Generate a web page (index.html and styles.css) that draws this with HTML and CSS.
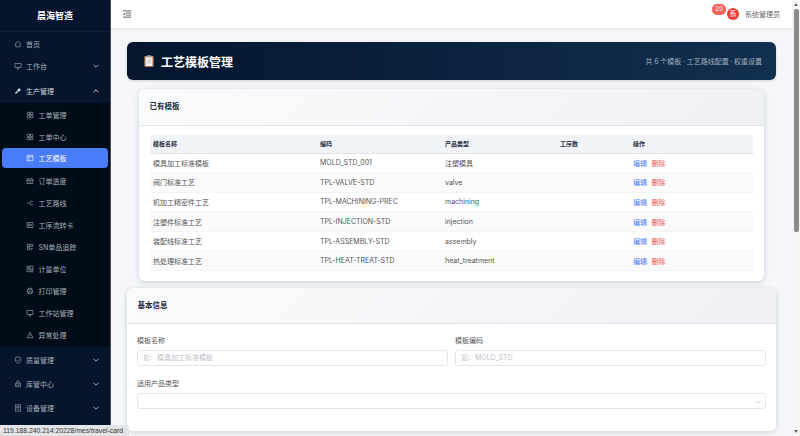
FILE: index.html
```html
<!DOCTYPE html>
<html lang="zh-CN">
  <head>
    <meta charset="UTF-8" />
    <meta name="viewport" content="width=device-width, initial-scale=1.0" />
    <title>工艺模板管理</title>
    <link rel="stylesheet" href="styles.css">
  </head>
  <body>
    <aside class="sidebar">
      <div class="logo">晨海智造</div>
      <nav class="menu">
        <div class="menu-item home">
          <svg class="icon" viewBox="0 0 16 16"><path d="M2 8l6-5.500L14 8M3.500 7v6.500h9V7"/></svg>
          <span>首页</span>
        </div>
        <div class="menu-item">
          <svg class="icon" viewBox="0 0 16 16"><path d="M2 3h12v8H2zM5.500 14h5M8 11v3"/></svg>
          <span>工作台</span>
          <svg class="arrow" viewBox="0 0 10 10"><path d="M2 3.500l3 3 3-3"/></svg>
        </div>
        <div class="menu-item open">
          <svg class="icon" viewBox="0 0 16 16"><path class="solid" d="M10 2l4 4-5 4-3-3zM5.500 8l2.500 2.500-4.500 3.500-1.500-1.500z"/></svg>
          <span>生产管理</span>
          <svg class="arrow" viewBox="0 0 10 10"><path d="M2 6.500l3-3 3 3"/></svg>
        </div>
        <div class="submenu">
          <div class="sub-item">
            <svg class="icon" viewBox="0 0 16 16"><path d="M2.500 2.500h4.500v4.500H2.500zM9 2.500h4.500v4.500H9zM2.500 9h4.500v4.500H2.500zM9 9h4.500v4.500H9z"/></svg>
            <span>工单管理</span>
          </div>
          <div class="sub-item">
            <svg class="icon" viewBox="0 0 16 16"><path d="M2.500 2.500h4.500v4.500H2.500zM9 2.500h4.500v4.500H9zM2.500 9h4.500v4.500H2.500zM9 9h4.500v4.500H9z"/></svg>
            <span>工单中心</span>
          </div>
          <div class="sub-item active">
            <svg class="icon" viewBox="0 0 16 16"><path d="M2 2.500h12v11H2zM2 5.500h12M6 5.500v8"/></svg>
            <span>工艺模板</span>
          </div>
          <div class="sub-item">
            <svg class="icon" viewBox="0 0 16 16"><path d="M2 4h12v9H2zM2 7h12M5 2.500V4M11 2.500V4M5 10h6"/></svg>
            <span>订单进度</span>
          </div>
          <div class="sub-item">
            <svg class="icon" viewBox="0 0 16 16"><path d="M1.500 8h6M9 4.500h5M9 11.500h5M7.500 8L9 4.500M7.500 8L9 11.500"/></svg>
            <span>工艺路线</span>
          </div>
          <div class="sub-item">
            <svg class="icon" viewBox="0 0 16 16"><path d="M2 3h12v10H2zM4.500 6h4v4h-4zM10.500 7H12M10.500 9H12"/></svg>
            <span>工序流转卡</span>
          </div>
          <div class="sub-item">
            <svg class="icon" viewBox="0 0 16 16"><path d="M2.500 2.500h4.500v4.500H2.500zM9 2.500h4.500v4.500H9zM2.500 9h4.500v4.500H2.500zM9 11h4.500M9 13.500h3"/></svg>
            <span>SN单品追踪</span>
          </div>
          <div class="sub-item">
            <svg class="icon" viewBox="0 0 16 16"><path d="M2 2.500h12v11H2zM8 2.500v11M2 8h12M4 5.300h2.500M10 10.700h2.500"/></svg>
            <span>计量单位</span>
          </div>
          <div class="sub-item">
            <svg class="icon" viewBox="0 0 16 16"><path d="M5 5.500V2.500h6v3M5 12H3V5.500h10V12h-2M5 9.500h6v4H5z"/></svg>
            <span>打印管理</span>
          </div>
          <div class="sub-item">
            <svg class="icon" viewBox="0 0 16 16"><path d="M2 3h12v8H2zM5.500 14h5M8 11v3"/></svg>
            <span>工作站管理</span>
          </div>
          <div class="sub-item">
            <svg class="icon" viewBox="0 0 16 16"><path d="M8 2.500l6 11H2zM8 6.500v3.500M8 11.500v.8"/></svg>
            <span>异常处理</span>
          </div>
        </div>
        <div class="menu-item">
          <svg class="icon" viewBox="0 0 16 16"><path d="M8 1.500l5.500 2v4.500c0 3-2.500 5-5.500 6.500-3-1.500-5.500-3.500-5.500-6.500V3.500zM5.500 8L7.500 10l3-3.500"/></svg>
          <span>质量管理</span>
          <svg class="arrow" viewBox="0 0 10 10"><path d="M2 3.500l3 3 3-3"/></svg>
        </div>
        <div class="menu-item">
          <svg class="icon" viewBox="0 0 16 16"><path d="M3 6.500h10v7H3zM5.500 6.500V4a2.500 2.500 0 0 1 5 0v2.500M3 10h10"/></svg>
          <span>库管中心</span>
          <svg class="arrow" viewBox="0 0 10 10"><path d="M2 3.500l3 3 3-3"/></svg>
        </div>
        <div class="menu-item">
          <svg class="icon" viewBox="0 0 16 16"><path d="M3 1.500h10v13H3zM5.500 4.500h5v3h-5zM5.500 10.500h5"/></svg>
          <span>设备管理</span>
          <svg class="arrow" viewBox="0 0 10 10"><path d="M2 3.500l3 3 3-3"/></svg>
        </div>
      </nav>
    </aside>

    <div class="main">
      <header class="topbar">
        <svg class="fold" viewBox="0 0 10 8"><path d="M0 .5h9M3.500 2.800h5.500M3.500 5.200h5.500M0 7.500h9"/><path class="solid" d="M2.500 2.300v3.400L.2 4z"/></svg>
        <div class="user">
          <span class="badge">20</span>
          <span class="avatar">系</span>
          <span class="username">系统管理员</span>
        </div>
      </header>

      <div class="content">
        <div class="banner">
          <h1>
            <svg class="clipboard" viewBox="0 0 12 14">
              <rect x="0.500" y="1" width="11" height="13" rx="1" fill="#c58f5f"/>
              <rect x="2" y="2.500" width="8" height="10.500" fill="#eef0f2"/>
              <rect x="3.500" y="0" width="5" height="2.500" rx=".5" fill="#9aa3ad"/>
              <path d="M3.300 5.500h5.400M3.300 7.500h5.400M3.300 9.500h5.400" stroke="#a9b1bb" stroke-width=".7"/>
            </svg>
            工艺模板管理
          </h1>
          <p>共 6 个模板 · 工艺路线配置 · 权重设置</p>
        </div>

        <section class="card inner">
          <div class="card-head">已有模板</div>
          <div class="list-body">
            <table class="tpl-table">
              <thead>
                <tr>
                  <th class="col-name">模板名称</th>
                  <th class="col-code">编码</th>
                  <th class="col-type">产品类型</th>
                  <th class="col-steps">工序数</th>
                  <th>操作</th>
                </tr>
              </thead>
              <tbody>
                <tr>
                  <td>模具加工标准模板</td><td>MOLD_STD_001</td><td>注塑模具</td><td></td>
                  <td><a class="edit">编辑</a><a class="del">删除</a></td>
                </tr>
                <tr>
                  <td>阀门标准工艺</td><td>TPL-VALVE-STD</td><td>valve</td><td></td>
                  <td><a class="edit">编辑</a><a class="del">删除</a></td>
                </tr>
                <tr>
                  <td>机加工精密件工艺</td><td>TPL-MACHINING-PREC</td><td>machining</td><td></td>
                  <td><a class="edit">编辑</a><a class="del">删除</a></td>
                </tr>
                <tr>
                  <td>注塑件标准工艺</td><td>TPL-INJECTION-STD</td><td>injection</td><td></td>
                  <td><a class="edit">编辑</a><a class="del">删除</a></td>
                </tr>
                <tr>
                  <td>装配线标准工艺</td><td>TPL-ASSEMBLY-STD</td><td>assembly</td><td></td>
                  <td><a class="edit">编辑</a><a class="del">删除</a></td>
                </tr>
                <tr>
                  <td>热处理标准工艺</td><td>TPL-HEAT-TREAT-STD</td><td>heat_treatment</td><td></td>
                  <td><a class="edit">编辑</a><a class="del">删除</a></td>
                </tr>
              </tbody>
            </table>
          </div>
        </section>

        <section class="card">
          <div class="card-head">基本信息</div>
          <div class="form-body">
            <div class="form-row">
              <label class="field">
                <span>模板名称</span>
                <input type="text" placeholder="如：模具加工标准模板" />
              </label>
              <label class="field">
                <span>模板编码</span>
                <input type="text" placeholder="如：MOLD_STD" />
              </label>
            </div>
            <div class="field">
              <span>适用产品类型</span>
              <div class="select">
                <svg viewBox="0 0 10 10"><path d="M1.500 3.500L5 7l3.500-3.500"/></svg>
              </div>
            </div>
          </div>
        </section>
      </div>
    </div>

    <div class="scrollbar">
      <i class="up"></i>
      <div class="thumb"></div>
      <i class="down"></i>
    </div>

    <div class="status">119.188.240.214:20228/mes/travel-card</div>
  </body>
</html>
```

FILE: styles.css
```css
* {
  box-sizing: border-box;
}

body {
  margin: 0;
  height: 436px;
  display: flex;
  overflow: hidden;
  background-color: #f4f6fa;
  color: #333;
  font-family: Inter, "Noto Sans CJK SC", sans-serif;
  font-size: 7px;
}

svg {
  flex-shrink: 0;
}

/* sidebar */
.sidebar {
  width: 111px;
  flex-shrink: 0;
  background-color: #04152d;
  border-right: 1px solid #4a4f57;
  color: #a6adb8;
  overflow: hidden;
}

.logo {
  height: 32px;
  line-height: 31px;
  text-align: center;
  color: #fff;
  font-size: 9px;
  font-weight: 700;
  border-bottom: 1px solid #0a1c36;
}

.menu-item {
  height: 24.300px;
  display: flex;
  align-items: center;
  gap: 4px;
  padding: 0 10px 0 14px;
}

.menu-item.home {
  height: 22.300px;
  padding-top: 1px;
}

.menu-item .arrow {
  margin-left: auto;
  width: 8px;
  height: 8px;
}

.menu-item.open {
  color: #d0d4da;
}

.icon {
  width: 8px;
  height: 8px;
  fill: none;
  stroke: currentColor;
  stroke-width: 1.200;
}

.icon .solid {
  fill: currentColor;
  stroke: none;
}

.arrow {
  fill: none;
  stroke: currentColor;
  stroke-width: 1.200;
}

.submenu {
  background-color: #000c17;
  padding: 1px 0;
}

.sub-item {
  height: 22.050px;
  display: flex;
  align-items: center;
  gap: 4.500px;
  padding-left: 26px;
}

.sub-item.active {
  height: 20px;
  margin: 0 2px 2px;
  padding-left: 24px;
  background-color: #4a7cf8;
  border-radius: 4px;
  color: #fff;
}

/* main */
.main {
  flex: 1;
  min-width: 0;
  display: flex;
  flex-direction: column;
}

.topbar {
  height: 28px;
  flex-shrink: 0;
  display: flex;
  align-items: center;
  justify-content: space-between;
  padding: 0 12px;
  background: #fff;
  box-shadow: 0 1px 3px rgba(0, 0, 0, 0.08);
  position: relative;
}

.fold {
  width: 9px;
  height: 8px;
  fill: none;
  stroke: #555;
  stroke-width: 1;
}

.fold .solid {
  fill: #555;
  stroke: none;
}

.user {
  display: flex;
  align-items: center;
  color: #666;
}

.avatar {
  width: 12px;
  height: 12px;
  border-radius: 50%;
  background-color: #e53f35;
  color: #fff;
  text-align: center;
  line-height: 12px;
  margin-right: 6px;
}

.badge {
  height: 10.500px;
  min-width: 14px;
  margin-right: 1px;
  margin-top: -9px;
  border-radius: 5px;
  background-color: #f2645c;
  color: #fff;
  text-align: center;
  line-height: 10.500px;
  font-size: 6px;
}

.content {
  flex: 1;
  padding: 14px 16px 0 16px;
}

.banner {
  height: 38px;
  display: flex;
  align-items: center;
  justify-content: space-between;
  padding: 0 14px 0 17px;
  border-radius: 6px;
  background: linear-gradient(90deg, #04152d, #11304f);
  color: #fff;
  box-shadow: 0 1px 3px rgba(0, 0, 0, 0.15);
}

.banner h1 {
  margin: 0;
  display: flex;
  align-items: center;
  gap: 7px;
  font-size: 12px;
  font-weight: 700;
}

.clipboard {
  width: 10px;
  height: 12px;
}

.banner p {
  margin: 0;
  color: #a3afbd;
  font-size: 7px;
  word-spacing: -0.3px;
}

/* cards */
.card {
  background: #fff;
  border-radius: 6px;
  overflow: hidden;
  box-shadow: 0 1px 5px rgba(30, 40, 70, 0.2);
}

.card.inner {
  margin: 9px 12px 6.500px 12px;
}

.card-head {
  height: 36.500px;
  line-height: 36px;
  padding: 0 10.500px;
  background: linear-gradient(135deg, #fafbfc, #eef0f4);
  border-bottom: 1px solid #dfe3ea;
  color: #1f2d44;
  font-size: 7.500px;
  font-weight: 700;
}

.list-body {
  padding: 9.500px 11px 10px;
}

.tpl-table {
  width: 100%;
  border-collapse: separate;
  border-spacing: 0;
  table-layout: fixed;
}

.tpl-table th {
  height: 18.500px;
  padding: 0 3px;
  text-align: left;
  color: #1f2d44;
  font-weight: 700;
  font-size: 6px;
  background-color: #f0f3f7;
  border-bottom: 1px solid #e0e3ea;
}

.tpl-table th:first-child {
  border-top-left-radius: 4px;
}

.tpl-table th:last-child {
  border-top-right-radius: 4px;
}

.col-name {
  width: 167px;
}

.col-code {
  width: 125px;
}

.col-type {
  width: 115px;
}

.col-steps {
  width: 73px;
}

.tpl-table td {
  height: 19.600px;
  padding: 0 3px;
  color: #555;
  border-bottom: 1px solid #f3f4f6;
  white-space: nowrap;
}

.tpl-table tbody tr:nth-child(even) td {
  background-color: #fafafa;
}

.edit {
  color: #4a7cf8;
  margin-right: 4.500px;
}

.del {
  color: #f0524a;
}

.form-body {
  padding: 10.500px 10px 0;
  height: 106.500px;
}

.form-row {
  display: grid;
  grid-template-columns: 1fr 1fr;
  gap: 7px;
  margin-bottom: 12.700px;
}

.field {
  display: block;
  color: #555;
  font-size: 7px;
}

.field span {
  display: block;
  margin-bottom: 5px;
}

.field input {
  width: 100%;
  height: 16px;
  padding: 0 5px;
  border: 1px solid #e3e5ea;
  border-radius: 3px;
  background: #fff;
  font: inherit;
  font-size: 7px;
  outline: 0;
}

.field input::placeholder {
  color: #bfc3ca;
}

.select {
  height: 15.500px;
  display: flex;
  align-items: center;
  justify-content: flex-end;
  padding-right: 3px;
  border: 1px solid #e3e5ea;
  border-radius: 3px;
}

.select svg {
  width: 7px;
  height: 7px;
  fill: none;
  stroke: #b8bcc4;
  stroke-width: 1;
}

/* browser chrome */
.scrollbar {
  width: 8px;
  flex-shrink: 0;
  display: flex;
  flex-direction: column;
  align-items: center;
  background-color: #f5f5f5;
  padding: 3px 0;
}

.thumb {
  width: 5px;
  height: 223px;
  margin: 3px 0 auto;
  border-radius: 2px;
  background-color: #8a8a8a;
}

.up,
.down {
  width: 0;
  height: 0;
  border-left: 2px solid transparent;
  border-right: 2px solid transparent;
}

.up {
  border-bottom: 3px solid #666;
}

.down {
  border-top: 3px solid #666;
}

.status {
  position: absolute;
  left: 0;
  bottom: 0;
  width: 129px;
  height: 11.500px;
  line-height: 11.500px;
  padding-left: 3px;
  background-color: #e3e4e6;
  border-top-right-radius: 3px;
  color: #333;
  font-family: "Liberation Sans", sans-serif;
  font-size: 6.800px;
  white-space: nowrap;
}
```
